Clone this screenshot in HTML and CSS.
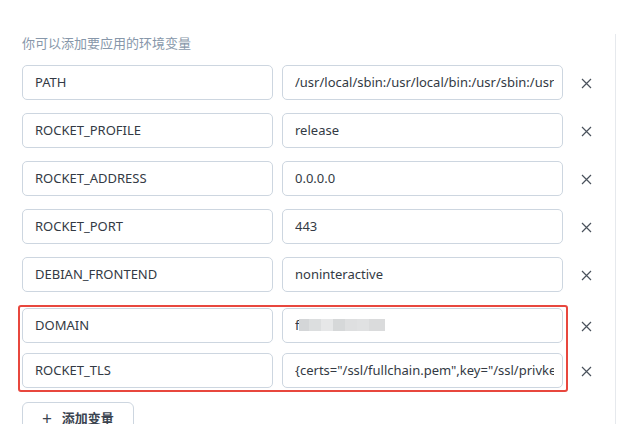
FILE: index.html
```html
<!DOCTYPE html>
<html lang="zh">
<head>
<meta charset="utf-8">
<link rel="stylesheet" href="styles.css">
</head>
<body>
<div class="page">
  <div class="panel">
    <p class="hint">你可以添加要应用的环境变量</p>
    <div class="rows">
      <div class="row">
        <div class="field key"><span class="txt">PATH</span></div>
        <div class="field val"><span class="txt">/usr/local/sbin:/usr/local/bin:/usr/sbin:/usr/bin:/sbin:/bin</span></div>
        <span class="del"><svg width="11" height="11" viewBox="0 0 11 11"><path d="M1 1L10 10M10 1L1 10" stroke="#4a525c" stroke-width="1.2" fill="none"/></svg></span>
      </div>
      <div class="row">
        <div class="field key"><span class="txt">ROCKET_PROFILE</span></div>
        <div class="field val"><span class="txt">release</span></div>
        <span class="del"><svg width="11" height="11" viewBox="0 0 11 11"><path d="M1 1L10 10M10 1L1 10" stroke="#4a525c" stroke-width="1.2" fill="none"/></svg></span>
      </div>
      <div class="row">
        <div class="field key"><span class="txt">ROCKET_ADDRESS</span></div>
        <div class="field val"><span class="txt">0.0.0.0</span></div>
        <span class="del"><svg width="11" height="11" viewBox="0 0 11 11"><path d="M1 1L10 10M10 1L1 10" stroke="#4a525c" stroke-width="1.2" fill="none"/></svg></span>
      </div>
      <div class="row">
        <div class="field key"><span class="txt">ROCKET_PORT</span></div>
        <div class="field val"><span class="txt">443</span></div>
        <span class="del"><svg width="11" height="11" viewBox="0 0 11 11"><path d="M1 1L10 10M10 1L1 10" stroke="#4a525c" stroke-width="1.2" fill="none"/></svg></span>
      </div>
      <div class="row">
        <div class="field key"><span class="txt">DEBIAN_FRONTEND</span></div>
        <div class="field val"><span class="txt">noninteractive</span></div>
        <span class="del"><svg width="11" height="11" viewBox="0 0 11 11"><path d="M1 1L10 10M10 1L1 10" stroke="#4a525c" stroke-width="1.2" fill="none"/></svg></span>
      </div>
      <div class="highlight">
        <div class="row">
          <div class="field key"><span class="txt">DOMAIN</span></div>
          <div class="field val"><span class="txt"><span class="first">f</span><span class="blur"><i class="b1"></i><i class="b2"></i><i class="b3"></i><i class="b4"></i><i class="b5"></i><i class="b6"></i><i class="b7"></i></span></span></div>
          <span class="del"><svg width="11" height="11" viewBox="0 0 11 11"><path d="M1 1L10 10M10 1L1 10" stroke="#4a525c" stroke-width="1.2" fill="none"/></svg></span>
        </div>
        <div class="row">
          <div class="field key"><span class="txt">ROCKET_TLS</span></div>
          <div class="field val"><span class="txt">{certs="/ssl/fullchain.pem",key="/ssl/privkey.pem"}</span></div>
          <span class="del"><svg width="11" height="11" viewBox="0 0 11 11"><path d="M1 1L10 10M10 1L1 10" stroke="#4a525c" stroke-width="1.2" fill="none"/></svg></span>
        </div>
      </div>
    </div>
    <button class="add"><span class="plus">+</span><span class="label">添加变量</span></button>
  </div>
  <div class="divider"></div>
</div>
</body>
</html>
```

FILE: styles.css
```css
html, body {
  margin: 0;
  padding: 0;
  background: #ffffff;
  width: 620px;
  height: 424px;
  overflow: hidden;
  font-family: "Noto Sans", "Noto Sans CJK SC", sans-serif;
}
.page {
  display: flex;
  height: 424px;
}
.panel {
  width: 615px;
  flex-shrink: 0;
  padding: 34px 0 0 22px;
  box-sizing: border-box;
}
.divider {
  margin-top: 34px;
  width: 1px;
  background: #e6e9ed;
}
.hint {
  margin: 0 0 13px 0;
  font-family: "Noto Sans CJK SC", sans-serif;
  font-size: 13px;
  line-height: 18px;
  color: #8797aa;
}
.rows {
  display: flex;
  flex-direction: column;
  gap: 13px;
}
.highlight {
  display: flex;
  flex-direction: column;
  gap: 10px;
  margin-left: -4px;
  padding: 1px 0 2px 2px;
  width: 550px;
  box-sizing: border-box;
  border: 2px solid #e8473e;
  border-radius: 3px;
}
.row {
  display: flex;
  align-items: center;
}
.field {
  flex-shrink: 0;
  box-sizing: border-box;
  height: 35px;
  border: 1px solid #cdd6e0;
  border-radius: 5px;
  padding: 0 8px 0 12px;
  font-size: 13px;
  line-height: 33px;
  color: #333a44;
  white-space: nowrap;
}
.txt {
  display: block;
  overflow: hidden;
  white-space: nowrap;
}
.key {
  width: 251px;
}
.val {
  width: 281px;
  margin-left: 9px;
}
.del {
  flex-shrink: 0;
  width: 46px;
  display: flex;
  align-items: center;
  justify-content: center;
  padding-top: 1px;
}
.first {
  color: #333a44;
}
.blur {
  display: inline-flex;
  vertical-align: middle;
  height: 12px;
  margin-top: -3px;
}
.blur i {
  display: block;
  height: 12px;
  width: 12px;
}
.b1 { background: #d4d6d8; width: 10px !important; }
.b2 { background: #dcdedf; }
.b3 { background: #e6e7e8; }
.b4 { background: #d6d8d9; }
.b5 { background: #dedfe0; }
.b6 { background: #e0e1e2; }
.b7 { background: #dadbdc; width: 16px !important; }
.add {
  margin-top: 10px;
  width: 112px;
  height: 36px;
  border: 1px solid #cdd6e0;
  border-radius: 6px;
  background: #fff;
  font-family: "Noto Sans CJK SC", sans-serif;
  font-size: 13px;
  font-weight: 700;
  color: #3b4450;
  display: flex;
  align-items: flex-start;
  justify-content: center;
  padding: 6px 0 0 0;
  line-height: 18px;
}
.plus {
  font-weight: 400;
  font-size: 17px;
  margin-right: 10px;
}
```
